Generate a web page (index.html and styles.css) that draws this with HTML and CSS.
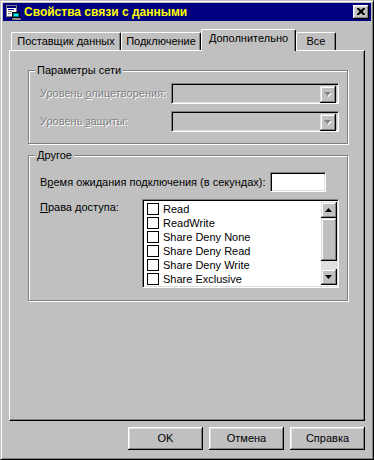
FILE: index.html
```html
<!DOCTYPE html>
<html lang="ru">
<head>
    <meta charset="UTF-8">
    <meta name="viewport" content="width=device-width, initial-scale=1.0">
    <title>Свойства связи с данными</title>
    <link rel="stylesheet" href="styles.css">
</head>
<body>
    <div class="window">
        <!-- заголовок окна -->
        <div class="titlebar">
            <svg class="app-icon" width="16" height="16" viewBox="0 0 16 16">
                <rect x="1.5" y="1.5" width="10" height="11" fill="#fff" stroke="#808080"/>
                <rect x="2" y="2" width="9" height="2" fill="#000080"/>
                <rect x="3" y="5" width="6" height="1" fill="#000080"/>
                <rect x="3" y="7" width="4" height="1" fill="#808080"/>
                <rect x="3" y="9" width="3" height="1" fill="#808080"/>
                <rect x="7.5" y="8.5" width="7" height="5" fill="#008080" stroke="#000"/>
                <rect x="9" y="10" width="4" height="2" fill="#00ffff"/>
                <rect x="7" y="14" width="9" height="2" fill="#c0c0c0" stroke="#000" stroke-width="0.5"/>
            </svg>
            <span class="title">Свойства связи с данными</span>
            <div class="close-btn">
                <svg width="8" height="7" viewBox="0 0 8 7">
                    <path d="M0 0h2l2 2 2-2h2v1l-2.5 2.5L8 6v1H6L4 5 2 7H0V6l2.5-2.5L0 1z" fill="#000"/>
                </svg>
            </div>
        </div>

        <!-- вкладки -->
        <div class="tabs">
            <div class="tab tab-provider">Поставщик данных</div>
            <div class="tab tab-connect">Подключение</div>
            <div class="tab tab-active tab-advanced">Дополнительно</div>
            <div class="tab tab-all">Все</div>
        </div>

        <div class="sheet">
            <div class="group group-net">
                <div class="group-title">Параметры сети</div>
                <div class="field-row">
                    <span class="label label-wide disabled">Уровень <u>о</u>лицетворения:</span>
                    <div class="combo">
                        <div class="combo-btn">
                            <svg width="7" height="4" viewBox="0 0 7 4"><path d="M0 0h7L3.5 4z" fill="#808080"/></svg>
                        </div>
                    </div>
                </div>
                <div class="field-row">
                    <span class="label label-wide disabled">Уровень <u>з</u>ащиты:</span>
                    <div class="combo">
                        <div class="combo-btn">
                            <svg width="7" height="4" viewBox="0 0 7 4"><path d="M0 0h7L3.5 4z" fill="#808080"/></svg>
                        </div>
                    </div>
                </div>
            </div>

            <div class="group group-other">
                <div class="group-title">Другое</div>
                <div class="field-row timeout-row">
                    <span class="label label-timeout">В<u>р</u>емя ожидания подключения (в секундах):</span>
                    <div class="edit"></div>
                </div>
                <div class="field-row list-row">
                    <span class="label label-access"><u>П</u>рава доступа:</span>
                    <div class="listbox">
                        <ul class="items">
                            <li><span class="check"></span>Read</li>
                            <li><span class="check"></span>ReadWrite</li>
                            <li><span class="check"></span>Share Deny None</li>
                            <li><span class="check"></span>Share Deny Read</li>
                            <li><span class="check"></span>Share Deny Write</li>
                            <li><span class="check"></span>Share Exclusive</li>
                        </ul>
                        <div class="scrollbar">
                            <div class="sb-btn">
                                <svg width="7" height="4" viewBox="0 0 7 4"><path d="M3.5 0L7 4H0z" fill="#000"/></svg>
                            </div>
                            <div class="sb-thumb"></div>
                            <div class="sb-track"></div>
                            <div class="sb-btn">
                                <svg width="7" height="4" viewBox="0 0 7 4"><path d="M0 0h7L3.5 4z" fill="#000"/></svg>
                            </div>
                        </div>
                    </div>
                </div>
            </div>
        </div>

        <div class="buttons">
            <div class="btn">OK</div>
            <div class="btn">Отмена</div>
            <div class="btn">Справка</div>
        </div>
    </div>
</body>
</html>
```

FILE: styles.css
```css
*{
    margin: 0;
    padding: 0;
    box-sizing: border-box;
}
body{
    font-family: "Liberation Sans", Arial, sans-serif;
    font-size: 11px;
    line-height: 13px;
    color: #000;
    background: #c0c0c0;
}
.window{
    width: 374px;
    height: 460px;
    background: #c0c0c0;
    border: 1px solid;
    border-color: #c0c0c0 #000 #000 #c0c0c0;
    box-shadow: inset 1px 1px #fff, inset -1px -1px #808080;
    padding: 2px;
    display: flex;
    flex-direction: column;
}

/* заголовок */
.titlebar{
    height: 18px;
    background: #000080;
    display: flex;
    align-items: center;
    padding: 0 2px;
}
.app-icon{
    flex: none;
}
.title{
    margin-left: 3px;
    color: #ffff00;
    font-weight: bold;
    font-size: 12px;
    flex: 1;
    white-space: nowrap;
}
.close-btn{
    width: 16px;
    height: 14px;
    background: #c0c0c0;
    box-shadow: inset -1px -1px #000, inset 1px 1px #fff, inset -2px -2px #808080, inset 2px 2px #dfdfdf;
    display: flex;
    align-items: center;
    justify-content: center;
    padding: 0 1px 1px 0;
}

/* вкладки */
.tabs{
    margin-top: 8px;
    margin-left: 6px;
    padding-left: 2px;
    height: 21px;
    display: flex;
    align-items: flex-end;
}
.tab{
    height: 18px;
    border-top: 1px solid #fff;
    border-left: 1px solid #fff;
    border-right: 1px solid #000;
    border-radius: 2px 2px 0 0;
    box-shadow: inset -1px 0 #808080;
    padding-top: 2px;
    text-align: center;
    white-space: nowrap;
    background: #c0c0c0;
}
.tab-provider{ width: 110px; }
.tab-connect{ width: 80px; }
.tab-advanced{ width: 95px; }
.tab-all{ width: 40px; }
.tab-active{
    height: 22px;
    margin-bottom: -1px;
    position: relative;
    z-index: 1;
}

/* страница */
.sheet{
    margin-left: 6px;
    width: 356px;
    height: 371px;
    border: 1px solid;
    border-color: #fff #000 #000 #fff;
    box-shadow: inset -1px -1px #808080;
    padding: 19px 0 0 18px;
}
.group{
    width: 320px;
    border: 1px solid #808080;
    box-shadow: inset 1px 1px #fff, 1px 1px #fff;
    padding: 0 8px 0 11px;
    display: flex;
    flex-direction: column;
}
.group-net{
    height: 74px;
}
.group-other{
    margin-top: 11px;
    height: 146px;
}
.group-title{
    align-self: flex-start;
    margin-top: -7px;
    margin-left: -5px;
    padding: 0 2px;
    background: #c0c0c0;
}
.field-row{
    display: flex;
    align-items: center;
}
.group-net .field-row{
    height: 21px;
    margin-top: 6px;
}
.group-net .field-row + .field-row{
    margin-top: 7px;
}
.label-wide{ width: 131px; }
.label-timeout{ width: 230px; }
.label-access{ width: 102px; margin-top: 2px; }
.disabled{
    color: #808080;
    text-shadow: 1px 1px #fff;
}

.combo{
    width: 168px;
    height: 21px;
    border: 1px solid;
    border-color: #808080 #fff #fff #808080;
    box-shadow: inset 1px 1px #000, inset -1px -1px #dfdfdf;
    padding: 2px;
    display: flex;
    justify-content: flex-end;
}
.combo-btn, .sb-btn{
    width: 16px;
    height: 17px;
    background: #c0c0c0;
    box-shadow: inset -1px -1px #000, inset 1px 1px #dfdfdf, inset -2px -2px #808080, inset 2px 2px #fff;
    display: flex;
    align-items: center;
    justify-content: center;
    padding: 0 1px 1px 0;
}
.combo-btn svg{
    filter: drop-shadow(1px 1px 0 #fff);
}

.timeout-row{
    margin-top: 10px;
}
.edit{
    width: 56px;
    height: 20px;
    background: #fff;
    border: 1px solid;
    border-color: #808080 #fff #fff #808080;
    box-shadow: inset 1px 1px #000, inset -1px -1px #dfdfdf;
}
.list-row{
    align-items: flex-start;
    margin-top: 7px;
}
.listbox{
    width: 197px;
    height: 89px;
    background: #fff;
    border: 1px solid;
    border-color: #808080 #fff #fff #808080;
    box-shadow: inset 1px 1px #000, inset -1px -1px #dfdfdf;
    padding: 2px 1px 2px 2px;
    display: flex;
}
.items{
    list-style: none;
    flex: 1;
    overflow: hidden;
}
.items li{
    height: 14px;
    line-height: 14px;
    display: flex;
    align-items: center;
    padding-left: 2px;
    white-space: nowrap;
}
.check{
    width: 12px;
    height: 12px;
    border: 1px solid #000;
    background: #fff;
    margin-right: 4px;
}
.scrollbar{
    width: 16px;
    display: flex;
    flex-direction: column;
}
.sb-btn{
    height: 16px;
}
.sb-thumb{
    height: 43px;
    background: #c0c0c0;
    box-shadow: inset -1px -1px #000, inset 1px 1px #dfdfdf, inset -2px -2px #808080, inset 2px 2px #fff;
}
.sb-track{
    flex: 1;
    background: #e0e0e0;
}

/* кнопки */
.buttons{
    margin-top: 6px;
    margin-right: 6px;
    display: flex;
    justify-content: flex-end;
    gap: 6px;
}
.btn{
    width: 75px;
    height: 23px;
    line-height: 23px;
    text-align: center;
    background: #c0c0c0;
    box-shadow: inset -1px -1px #000, inset 1px 1px #fff, inset -2px -2px #808080, inset 2px 2px #dfdfdf;
}
```
